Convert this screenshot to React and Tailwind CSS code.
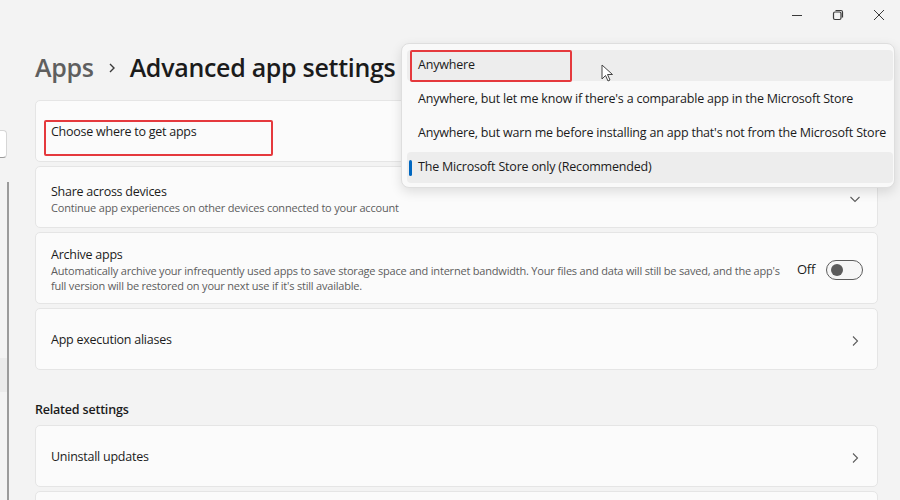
const font = { fontFamily: '"Segoe UI", "Open Sans", "Noto Sans", sans-serif' };

const ChevronRight = () => (
    <svg width="16" height="16" viewBox="0 0 16 16" className="text-[#5c5c5c]">
        <path d="M6 3.5 L10.5 8 L6 12.5" fill="none" stroke="currentColor" strokeWidth="1.1" />
    </svg>
);

const ChevronDown = () => (
    <svg width="16" height="16" viewBox="0 0 16 16" className="text-[#5c5c5c]">
        <path d="M3.5 6 L8 10.5 L12.5 6" fill="none" stroke="currentColor" strokeWidth="1.1" />
    </svg>
);

const Card = ({ h, children }) => (
    <div className={`${h} shrink-0 bg-[#fbfbfb] border border-[#e5e5e5] rounded-[5px] flex items-center pl-[15px] pr-[14px] pt-[3px]`}>
        {children}
    </div>
);

const Option = ({ label, active, hover }) => (
    <div className={`relative h-[31px] shrink-0 ml-[5px] mr-[1px] rounded-[4px] flex items-center pl-[11px] text-[12.5px] tracking-[-0.2px] text-[#1b1b1b] ${active || hover ? 'bg-[#ededed]' : ''}`}>
        {active && <div className="absolute left-[2px] top-[8px] w-[3px] h-[16px] rounded-full bg-[#0067c0]" />}
        {label}
    </div>
);

export default function App() {
    return (
        <div className="relative w-[900px] h-[500px] overflow-hidden bg-[#f3f3f3] flex flex-col" style={font}>
            {/* title bar controls */}
            <div className="h-[30px] shrink-0 flex justify-end items-center pr-[1px]">
                <div className="w-[41px] flex justify-center">
                    <svg width="12" height="12" viewBox="0 0 12 12">
                        <path d="M1 6.5 H11" stroke="#3a3a3a" strokeWidth="1" />
                    </svg>
                </div>
                <div className="w-[41px] flex justify-center">
                    <svg width="12" height="12" viewBox="0 0 12 12">
                        <rect x="1.5" y="3" width="7.5" height="7.5" rx="1.5" fill="none" stroke="#3a3a3a" strokeWidth="1.2" />
                        <path d="M3.5 1.5 H9 Q10.5 1.5 10.5 3 V8.5" fill="none" stroke="#3a3a3a" strokeWidth="1.2" />
                    </svg>
                </div>
                <div className="w-[41px] flex justify-center">
                    <svg width="12" height="12" viewBox="0 0 12 12">
                        <path d="M1 1 L11 11 M11 1 L1 11" stroke="#3a3a3a" strokeWidth="1" />
                    </svg>
                </div>
            </div>

            <div className="flex-1 flex min-h-0">
                {/* left nav sliver */}
                <div className="w-[9px] shrink-0 flex flex-col">
                    <div className="mt-[100px] h-[28px] w-[7px] shrink-0 bg-white border border-l-0 border-[#d6d6d6] border-b-[#9a9a9a] rounded-r-[4px]" />
                    <div className="mt-[24px] flex-1 flex">
                        <div className="w-[7px] flex flex-col">
                            <div className="mt-[176px] h-[34px] bg-[#ebebeb]" />
                        </div>
                        <div className="w-[2px] bg-[#9b9b9b]" />
                    </div>
                </div>

                {/* main */}
                <div className="flex-1 flex flex-col pl-[26px] pr-[22px]">
                    {/* title */}
                    <div className="mt-[20px] h-[36px] shrink-0 flex items-center text-[25px] font-semibold tracking-[-0.3px]">
                        <span className="text-[#5f5f5f]">Apps</span>
                        <span className="mx-[11px]">
                            <svg width="14" height="14" viewBox="0 0 14 14">
                                <path d="M5 3 L9 7 L5 11" fill="none" stroke="#3a3a3a" strokeWidth="1.4" />
                            </svg>
                        </span>
                        <span className="text-[#1b1b1b]">Advanced app settings</span>
                    </div>

                    <div className="mt-[14px] shrink-0 flex flex-col gap-[4px] text-[12.5px] tracking-[-0.25px]">
                        <Card h="h-[62px]">
                            <div className="relative text-[#1b1b1b]">
                                Choose where to get apps
                                <div className="absolute left-[-7px] top-[-3px] w-[229px] h-[36px] border-2 border-[#e5393d] rounded-[2px]" />
                            </div>
                        </Card>
                        <Card h="h-[62px]">
                            <div className="flex-1 flex flex-col">
                                <span className="text-[#1b1b1b] leading-[17px]">Share across devices</span>
                                <span className="text-[11px] tracking-[-0.2px] text-[#5d5d5d] leading-[15px]">Continue app experiences on other devices connected to your account</span>
                            </div>
                            <ChevronDown />
                        </Card>
                        <Card h="h-[72px]">
                            <div className="flex-1 flex flex-col">
                                <span className="text-[#1b1b1b] leading-[17px]">Archive apps</span>
                                <span className="text-[11px] tracking-[-0.2px] text-[#5d5d5d] leading-[15px] max-w-[732px]">Automatically archive your infrequently used apps to save storage space and internet bandwidth. Your files and data will still be saved, and the app's full version will be restored on your next use if it's still available.</span>
                            </div>
                            <span className="ml-[14px] text-[13px] text-[#1b1b1b]">Off</span>
                            <div className="ml-[11px] w-[37px] h-[20px] rounded-full border border-[#5c5c5c] bg-[#f6f6f6] flex items-center pl-[4px]">
                                <div className="w-[12px] h-[12px] rounded-full bg-[#5c5c5c]" />
                            </div>
                        </Card>
                        <Card h="h-[62px]">
                            <span className="flex-1 text-[#1b1b1b]">App execution aliases</span>
                            <ChevronRight />
                        </Card>
                    </div>

                    <div className="mt-[30px] mb-[5px] h-[20px] shrink-0 flex items-center text-[12.5px] tracking-[-0.2px] font-semibold text-[#1b1b1b]">Related settings</div>

                    <div className="shrink-0 flex flex-col gap-[4px] text-[12.5px] tracking-[-0.25px]">
                        <Card h="h-[62px]">
                            <span className="flex-1 text-[#1b1b1b]">Uninstall updates</span>
                            <ChevronRight />
                        </Card>
                        <Card h="h-[62px]">
                            <span className="flex-1 text-[#1b1b1b]"></span>
                        </Card>
                    </div>
                </div>
            </div>

            {/* dropdown flyout */}
            <div className="absolute left-[401px] top-[43px] w-[494px] h-[145px] bg-[#f9f9f9] border border-[#dedede] rounded-[8px] shadow-[0_4px_12px_rgba(0,0,0,0.12)] pt-[6px] flex flex-col gap-[3px]">
                <Option label="Anywhere" hover />
                <Option label="Anywhere, but let me know if there's a comparable app in the Microsoft Store" />
                <Option label="Anywhere, but warn me before installing an app that's not from the Microsoft Store" />
                <Option label="The Microsoft Store only (Recommended)" active />
                <div className="absolute left-[8px] top-[6px] w-[162px] h-[32px] border-2 border-[#e5393d] rounded-[2px]" />
                {/* mouse cursor */}
                <svg width="14" height="20" viewBox="0 0 14 20" className="absolute left-[199px] top-[20px]">
                    <path d="M1 1 L1 15 L4.5 11.5 L7 17 L9 16 L6.5 10.5 L11.5 10.5 Z" fill="#ffffff" stroke="#444" strokeWidth="1" strokeLinejoin="round" />
                </svg>
            </div>
        </div>
    );
}
